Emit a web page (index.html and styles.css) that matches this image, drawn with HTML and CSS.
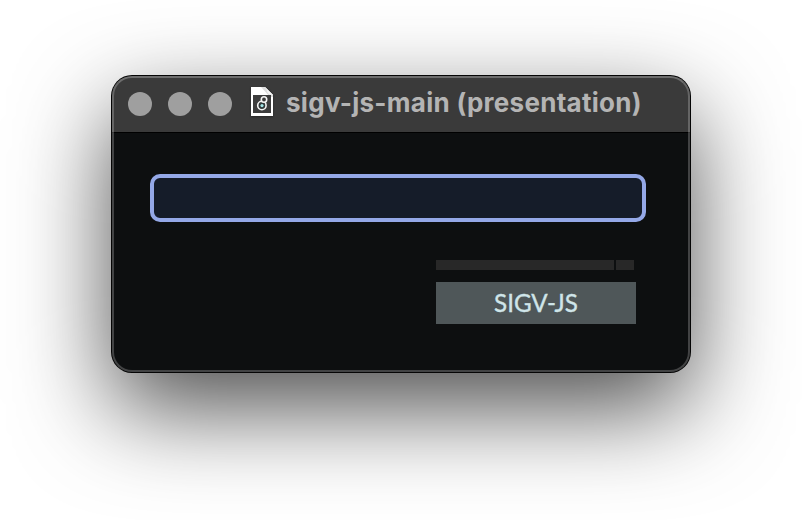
FILE: index.html
```
<!DOCTYPE html>
<html lang="en">
<head>
<meta charset="utf-8">
<title>sigv-js-main (presentation)</title>
<link rel="stylesheet" href="styles.css">
</head>
<body>
<main class="window">
  <header class="titlebar">
    <div class="lights"><span class="light"></span><span class="light"></span><span class="light"></span></div>
    <svg class="doc" width="24" height="32" viewBox="0 0 24 32" aria-hidden="true">
      <path d="M1 1H15L23 9V30H1Z" fill="#fff"/>
      <path d="M11 1H15L23 9V11H20Z" fill="#dedede"/>
      <path d="M3 9H21V27H3Z" fill="#3c3c3c"/>
      <path d="M15 1L23 9Q18.500 9 17.500 6.500Q17 3 15 1Z" fill="#f4f4f4"/>
      <circle cx="11.900" cy="19.500" r="4.200" fill="#303838" stroke="#f4f4f4" stroke-width="1.600"/>
      <circle cx="14" cy="13.500" r="2.700" fill="#3c3c3c" stroke="#f4f4f4" stroke-width="1.600"/>
      <circle cx="12" cy="19.600" r="1.600" fill="#a4e6e8"/>
    </svg>
    <h1 class="title">sigv-js-main (presentation)</h1>
  </header>
  <section class="content">
    <div class="field"></div>
    <div class="module">
      <div class="meters"><span class="meter"></span><span class="meter meter-end"></span></div>
      <div class="label">SIGV-JS</div>
    </div>
  </section>
</main>
</body>
</html>
```
FILE: styles.css
```
* { box-sizing: border-box; }
body {
  margin: 0;
  height: 520px;
  padding: 76px 112px;
  background: #fff;
  overflow: hidden;
}
.window {
  position: relative;
  width: 578px;
  height: 296px;
  border-radius: 20px;
  background: #0d0f10;
  box-shadow: 0 0 0 1px #050505, 0 36px 96px rgba(0, 0, 0, .7);
}
.window::after {
  content: "";
  position: absolute;
  inset: 0;
  border-radius: 20px;
  border: 2px solid rgba(255, 255, 255, .22);
  border-top-color: rgba(255, 255, 255, .26);
}
.titlebar {
  display: flex;
  height: 57px;
  padding-left: 16px;
  border-radius: 20px 20px 0 0;
  background: #3a3a3a;
  border-bottom: 1px solid #000;
}
.lights {
  display: flex;
  gap: 16px;
  padding-top: 16px;
}
.light {
  width: 24px;
  height: 24px;
  border-radius: 50%;
  background: #9f9f9f;
}
.doc {
  margin: 10px 0 0 18px;
  filter: drop-shadow(0 1px 1px rgba(0, 0, 0, .35));
}
.title {
  margin: 11px 0 0 12px;
  font: 700 26px/32px Inter, sans-serif;
  letter-spacing: .28px;
  color: #b4b4b4;
  white-space: nowrap;
}
.content {
  padding: 41px 44px 0 38px;
}
.field {
  width: 496px;
  height: 48px;
  border: 4px solid #94a8e7;
  border-radius: 10px;
  background: #151c29;
}
.module {
  width: 200px;
  margin: 38px 0 0 286px;
}
.meters {
  display: flex;
  gap: 2px;
}
.meter {
  width: 178px;
  height: 10px;
  background: #282828;
}
.meter-end { width: 18px; }
.label {
  height: 42px;
  margin-top: 12px;
  background: #4f5759;
  color: #cfe5e9;
  font: 400 24.2px/42px Lato, sans-serif;
  -webkit-text-stroke: .35px #cfe5e9;
  text-align: center;
}
```
